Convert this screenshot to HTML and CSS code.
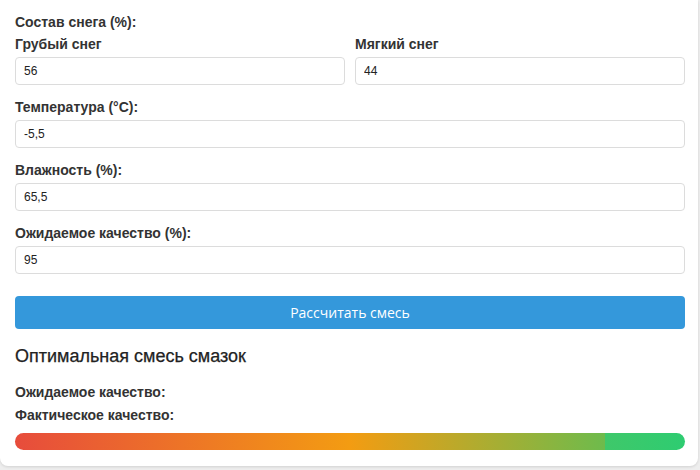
FILE: index.html
```html
<!DOCTYPE html>
<html lang="ru">
<head>
<meta charset="utf-8">
<title>Смесь смазок</title>
<link rel="stylesheet" href="styles.css">
</head>
<body>
<div class="card">
  <div class="group">
    <label class="label label-head">Состав снега (%):</label>
    <div class="cols">
      <div class="col">
        <label class="label">Грубый снег</label>
        <input class="input" type="text" value="56">
      </div>
      <div class="col">
        <label class="label">Мягкий снег</label>
        <input class="input" type="text" value="44">
      </div>
    </div>
  </div>
  <div class="group">
    <label class="label">Температура (°C):</label>
    <input class="input" type="text" value="-5,5">
  </div>
  <div class="group">
    <label class="label">Влажность (%):</label>
    <input class="input" type="text" value="65,5">
  </div>
  <div class="group">
    <label class="label">Ожидаемое качество (%):</label>
    <input class="input" type="text" value="95">
  </div>
  <button class="btn" type="button">Рассчитать смесь</button>
  <h3 class="result-title">Оптимальная смесь смазок</h3>
  <div class="result-row">Ожидаемое качество:</div>
  <div class="result-row">Фактическое качество:</div>
  <div class="bar"></div>
</div>
</body>
</html>
```
FILE: styles.css
```css
html, body {
  margin: 0;
  padding: 0;
  background: #eeeeee;
}
body {
  font-family: "Liberation Sans", Arial, sans-serif;
  color: #333;
  height: 470px;
  overflow: hidden;
}
.card {
  width: 698px;
  box-sizing: border-box;
  background: #fff;
  border-radius: 0 0 8px 8px;
  box-shadow: 0 1px 3px rgba(0,0,0,0.12);
  padding: 14px 13px 16px 15px;
}
.group {
  margin-bottom: 14px;
}
.label {
  display: block;
  font-size: 14px;
  line-height: 16px;
  font-weight: bold;
  color: #333;
  margin-bottom: 5px;
}
.label-head {
  margin-bottom: 6px;
}
.cols {
  display: grid;
  grid-template-columns: 1fr 1fr;
  gap: 10px;
}
.input {
  display: block;
  width: 100%;
  box-sizing: border-box;
  height: 28px;
  border: 1px solid #dcdcdc;
  border-radius: 4px;
  padding: 0 8px;
  font-family: "Liberation Sans", Arial, sans-serif;
  font-size: 12px;
  color: #222;
  background: #fff;
  outline: none;
}
.btn {
  display: block;
  width: 100%;
  height: 33px;
  margin-top: 22px;
  border: none;
  border-radius: 4px;
  background: #3498db;
  color: #fff;
  font-family: "Open Sans", "Noto Sans", sans-serif;
  font-size: 14px;
  cursor: pointer;
}
.result-title {
  margin: 17px 0 0;
  font-size: 18px;
  line-height: 20px;
  font-weight: normal;
  color: #222;
  -webkit-text-stroke: 0.25px #222;
}
.result-row {
  margin-top: 8px;
  font-size: 14px;
  line-height: 15px;
  font-weight: bold;
}
.result-title + .result-row {
  margin-top: 19px;
}
.bar {
  margin-top: 10px;
  height: 17px;
  border-radius: 9px;
  background: linear-gradient(90deg, #e74c3c 0%, #f39c12 50%, #6ebb4c 88%, #3fc86a 88%, #2ecc71 100%);
}
```
